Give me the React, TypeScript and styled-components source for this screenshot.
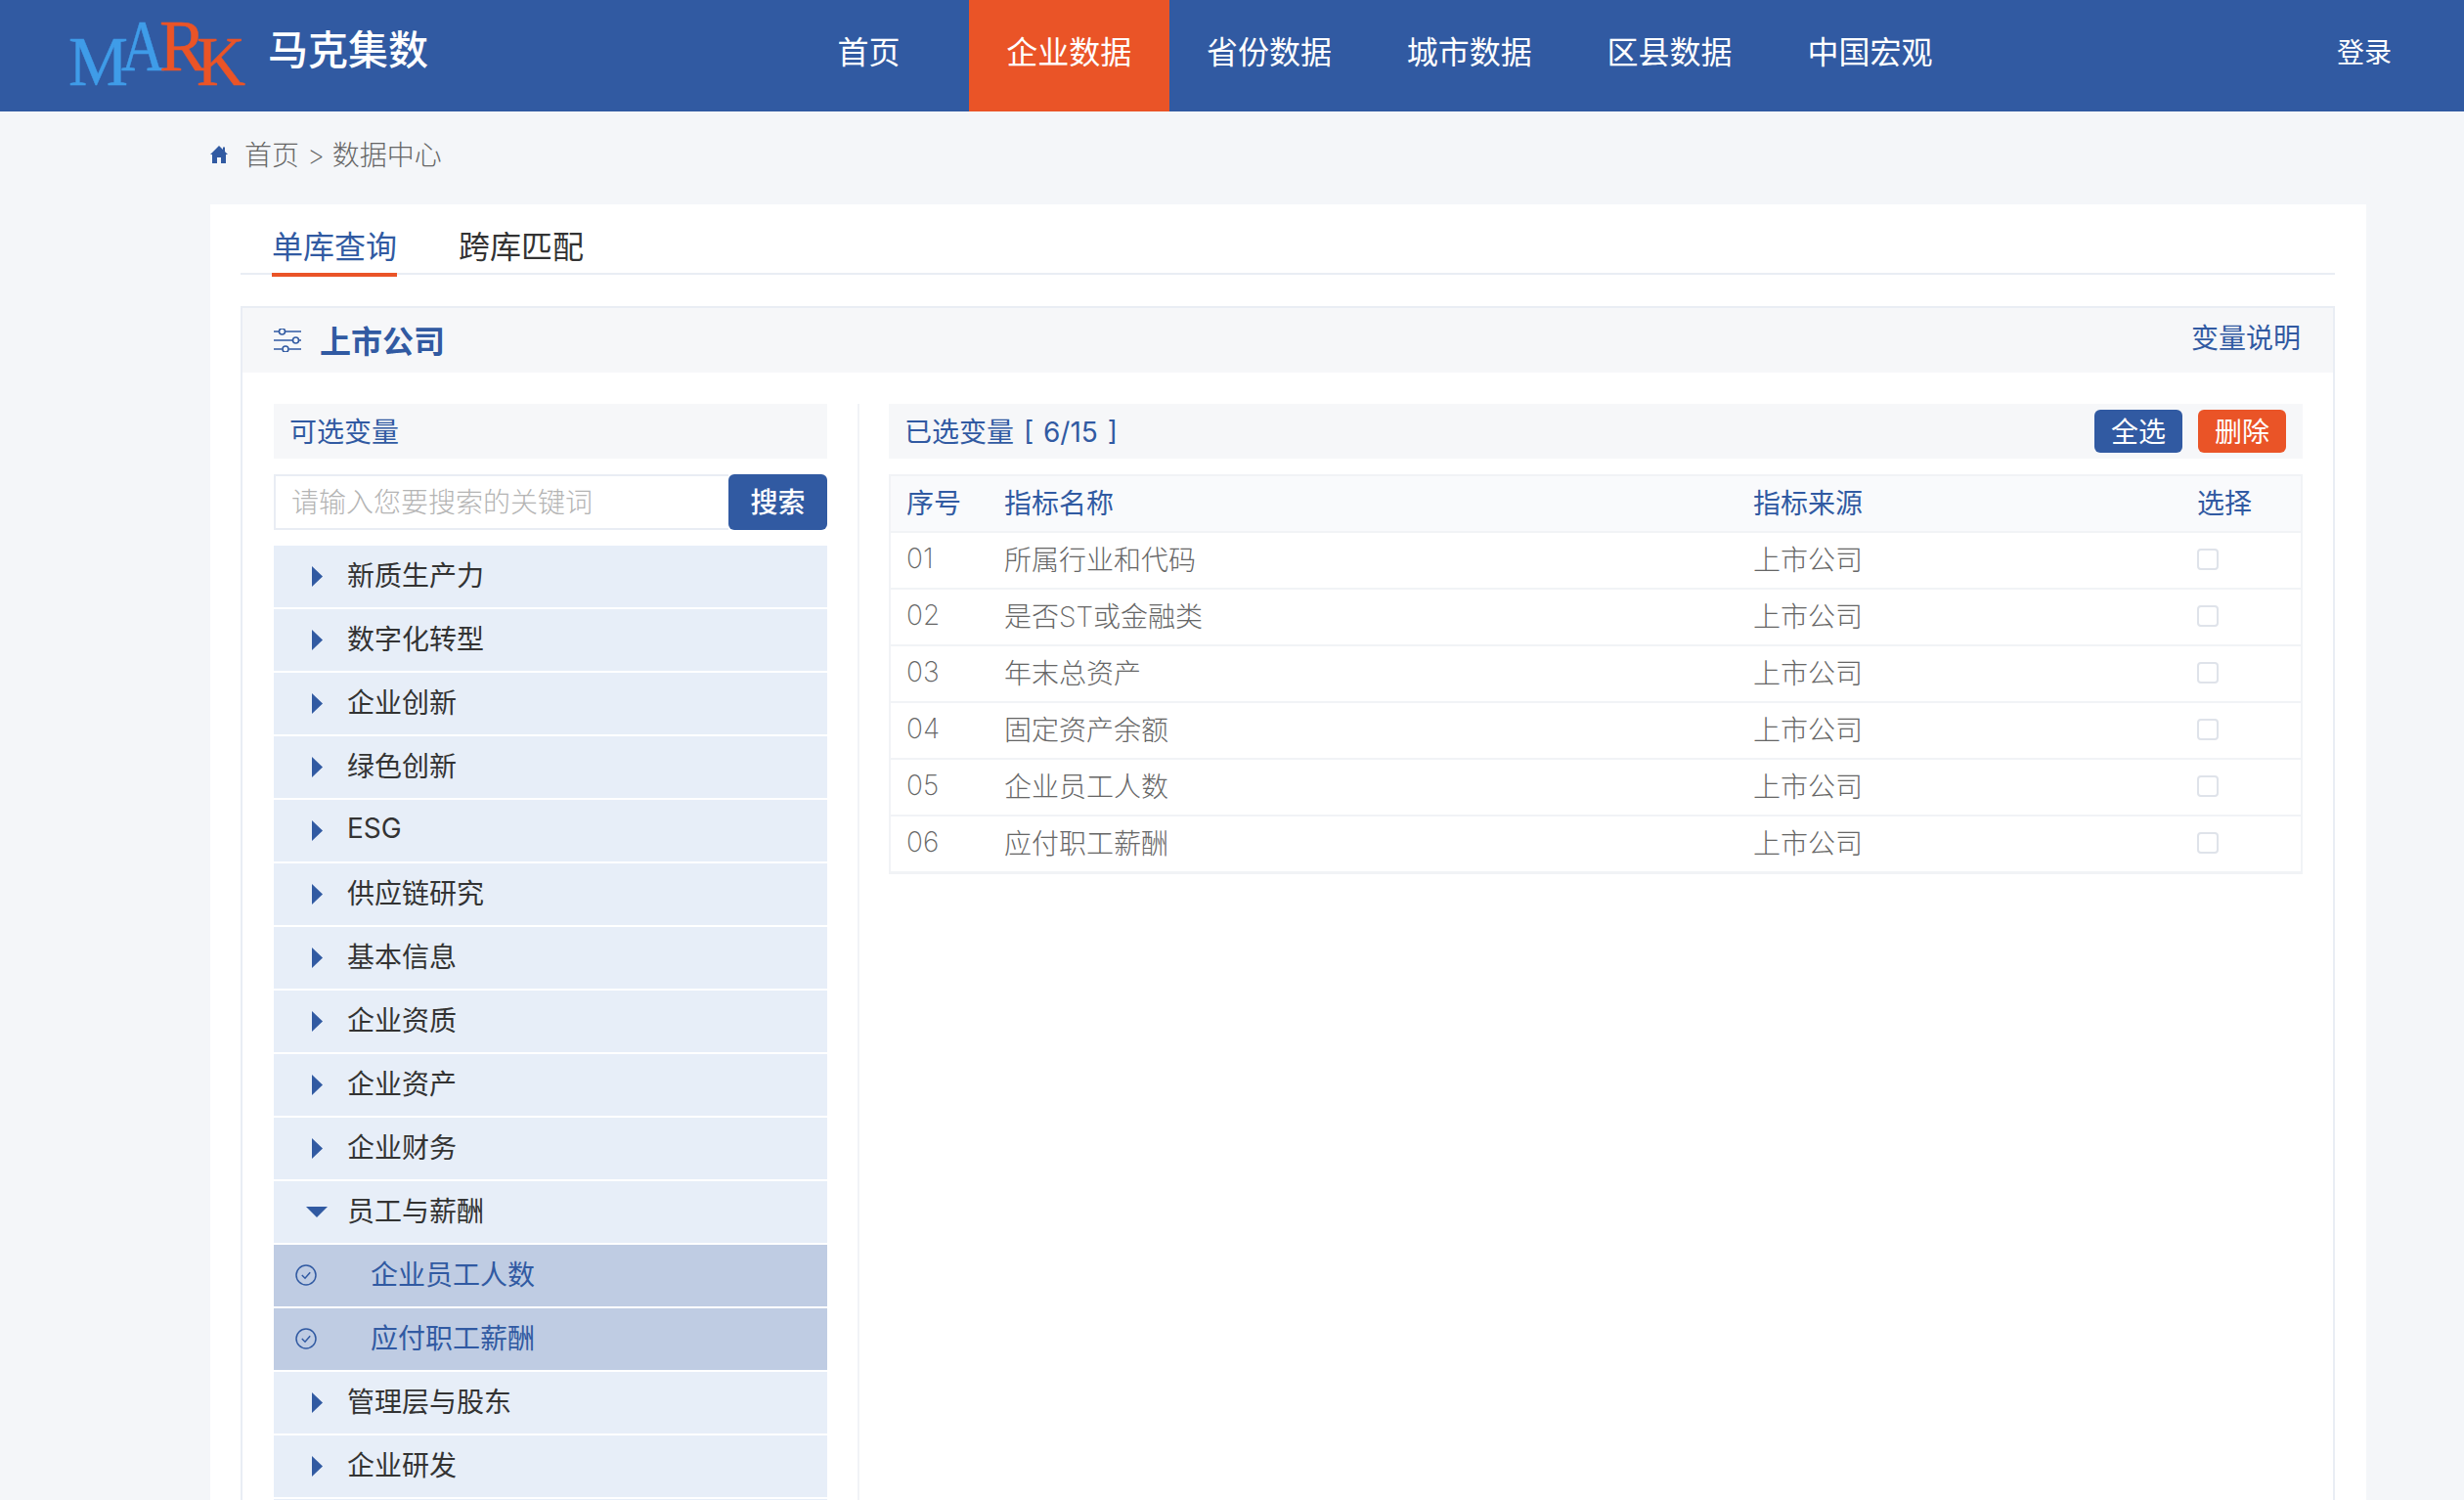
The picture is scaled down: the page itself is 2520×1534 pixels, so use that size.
import React from "react";
import styled, { createGlobalStyle } from "styled-components";

const BLUE = "#315aa2";
const ORANGE = "#ea5427";
const LINE = "#e9edf4";
const SANS = `"Inter", "Noto Sans CJK SC", sans-serif`;

const GlobalStyle = createGlobalStyle`
  html, body {
    margin: 0;
    height: 100%;
    overflow: hidden;
    background: #f4f6f9;
    font-family: ${SANS};
  }
  * { box-sizing: border-box; }
`;

const Page = styled.div`
  height: 1534px;
  overflow: hidden;
`;

const Header = styled.header`
  display: flex;
  align-items: stretch;
  height: 114px;
  background: ${BLUE};
  color: #fff;
`;

const Brand = styled.div`
  display: flex;
  align-items: center;
  width: 786px;
  padding-left: 68px;
`;

const BrandName = styled.span`
  margin: -18px 0 0 20px;
  font-size: 41px;
  font-weight: 500;
`;

const Nav = styled.nav`
  display: flex;
`;

const NavItem = styled.a<{ $active?: boolean }>`
  display: flex;
  align-items: center;
  justify-content: center;
  width: 204.8px;
  padding-bottom: 12px;
  font-size: 32px;
  background: ${(p) => (p.$active ? ORANGE : "transparent")};
`;

const Login = styled.a`
  display: flex;
  align-items: center;
  margin-left: auto;
  padding: 0 74px 10px 0;
  font-size: 28px;
`;

const Main = styled.main`
  padding: 0 100px 0 215px;
`;

const Crumb = styled.div`
  display: flex;
  align-items: center;
  height: 88px;
  margin-bottom: 7px;
  font-size: 28px;
  font-weight: 200;
  color: #666;
`;

const CrumbLabel = styled.span`
  margin: -2px 0 0 17px;
`;

const Card = styled.section`
  padding: 0 32px 0 31px;
  background: #fff;
`;

const Tabs = styled.div`
  display: flex;
  align-items: flex-end;
  height: 72px;
  padding-left: 32px;
  border-bottom: 2px solid ${LINE};
`;

const Tab = styled.a<{ $active?: boolean }>`
  margin: 0 63px -4px 0;
  padding-bottom: 6px;
  font-size: 32px;
  line-height: 41px;
  color: ${(p) => (p.$active ? BLUE : "#333")};
  border-bottom: 4px solid ${(p) => (p.$active ? ORANGE : "transparent")};
`;

const Panel = styled.div`
  margin-top: 32px;
  border: 2px solid ${LINE};
  border-bottom: 0;
`;

const PanelHead = styled.div`
  display: flex;
  align-items: center;
  height: 66px;
  padding: 0 33px 0 32px;
  background: #f6f7f9;
`;

const PanelTitle = styled.h2`
  margin: -2px 0 0 19px;
  font-size: 32px;
  font-weight: 700;
  color: ${BLUE};
`;

const Explain = styled.a`
  margin: -8px 0 0 auto;
  font-size: 28px;
  color: ${BLUE};
`;

const PanelBody = styled.div`
  display: flex;
  padding: 32px 31px 0 32px;
`;

const LeftCol = styled.div`
  flex: none;
  width: 566px;
`;

const RightCol = styled.div`
  flex: 1;
  margin-left: 31px;
  padding-left: 30px;
  border-left: 2px solid #f1f3f6;
`;

const SectionBar = styled.div`
  display: flex;
  align-items: center;
  height: 56px;
  padding: 0 17px 3px 16px;
  margin-bottom: 16px;
  background: #f6f7f9;
  font-size: 28px;
  color: ${BLUE};
`;

const Search = styled.div`
  display: flex;
  height: 57px;
  margin-bottom: 16px;
`;

const SearchInput = styled.input`
  flex: 1;
  min-width: 0;
  padding: 0 0 0 16px;
  border: 2px solid ${LINE};
  border-right: 0;
  outline: 0;
  font-family: ${SANS};
  font-size: 28px;
  font-weight: 200;
  &::placeholder {
    color: #b4b4b4;
  }
`;

const SearchButton = styled.button`
  width: 101px;
  padding: 0 0 4px;
  border: 0;
  border-radius: 6px;
  background: ${BLUE};
  color: #fff;
  font-family: ${SANS};
  font-size: 28px;
  font-weight: 500;
`;

const Row = styled.div<{ $selected?: boolean }>`
  display: flex;
  align-items: center;
  height: 63px;
  margin-bottom: 2px;
  padding-bottom: 5px;
  background: ${(p) => (p.$selected ? "#bfcce3" : "#e7eef8")};
  font-size: 28px;
  color: ${(p) => (p.$selected ? BLUE : "#333")};
`;

const ArrowBox = styled.span`
  display: flex;
  justify-content: center;
  flex: none;
  width: 75px;
  padding: 5px 0 0 13px;
`;

const CheckBox = styled.span`
  display: flex;
  flex: none;
  width: 99px;
  padding: 4px 0 0 22px;
`;

const ToolButton = styled.button<{ $danger?: boolean }>`
  width: 90px;
  height: 44px;
  padding: 0 0 3px;
  margin: 3px 0 0 16px;
  border: 0;
  border-radius: 6px;
  background: ${(p) => (p.$danger ? ORANGE : BLUE)};
  color: #fff;
  font-family: ${SANS};
  font-size: 28px;
`;

const SelectedCount = styled.span`
  margin-right: auto;
  word-spacing: 2px;
`;

const Table = styled.div`
  border: 2px solid #f1f3f6;
  border-bottom-width: 3px;
`;

const TableRow = styled.div<{ $head?: boolean }>`
  display: grid;
  grid-template-columns: 100px 766px 454px 1fr;
  align-items: center;
  height: 58px;
  padding: 0 0 4px 16px;
  border-bottom: 2px solid #f1f3f6;
  background: ${(p) => (p.$head ? "#f9fafc" : "#fff")};
  font-size: 28px;
  font-weight: ${(p) => (p.$head ? 400 : 200)};
  color: ${(p) => (p.$head ? BLUE : "#666")};
  &:last-child {
    border-bottom: 0;
    height: 56px;
  }
`;

const Tick = styled.span`
  width: 22px;
  height: 22px;
  margin-top: 2px;
  border: 2px solid #dfe3ea;
  border-radius: 4px;
  background: #fff;
`;

const LogoMark = styled.svg`
  flex: none;
  overflow: visible;
  margin-top: -3px;
`;

const Logo = () => (
  <LogoMark width="186" height="68" viewBox="0 0 186 68">
    <g fontFamily='"Liberation Serif", serif' fontSize="72">
      <text x="2" y="65" fill="#3f9ce8" stroke="#3f9ce8" strokeWidth="0.5" textLength="61" lengthAdjust="spacingAndGlyphs">
        M
      </text>
      <text x="56" y="50" fill="#3f9ce8" stroke="#3f9ce8" strokeWidth="0.5" fontSize="73" textLength="44" lengthAdjust="spacingAndGlyphs">
        A
      </text>
      <text x="95" y="50" fill={ORANGE} stroke={ORANGE} strokeWidth="0.5" fontSize="73" textLength="48" lengthAdjust="spacingAndGlyphs">
        R
      </text>
      <text x="133" y="65" fill={ORANGE} stroke={ORANGE} strokeWidth="0.5" textLength="50" lengthAdjust="spacingAndGlyphs">
        K
      </text>
    </g>
  </LogoMark>
);

const HomeIcon = () => (
  <svg width="18" height="18" viewBox="0 0 18 18" fill={BLUE}>
    <path d="M9 0 L13 4 V1.5 H15 V6 L18 9 L16 9 L16 18 L11 18 L11 12 L7 12 L7 18 L2 18 L2 9 L0 9 Z" />
  </svg>
);

const SlidersIcon = () => (
  <svg width="28" height="24" viewBox="0 0 28 24" fill="none" stroke={BLUE} strokeWidth="1.6">
    <path d="M0 3H5M12 3H28M0 12H19M26 12H28M0 21H8.500M15.500 21H28" />
    <circle cx="8.500" cy="3" r="3" />
    <circle cx="22.500" cy="12" r="3" />
    <circle cx="12" cy="21" r="3" />
  </svg>
);

const ArrowRight = () => (
  <svg width="11" height="21" viewBox="0 0 11 21" fill={BLUE}>
    <path d="M0 0 L11 10.5 L0 21 Z" />
  </svg>
);

const ArrowDown = () => (
  <svg width="22" height="11" viewBox="0 0 22 11" fill={BLUE}>
    <path d="M0 0 H22 L11 11 Z" />
  </svg>
);

const CheckIcon = () => (
  <svg width="22" height="22" viewBox="0 0 22 22" fill="none" stroke={BLUE} strokeWidth="1.5">
    <circle cx="11" cy="11" r="10" />
    <path d="M6.8 11 L10 14.2 L15.2 8.2" />
  </svg>
);

const navItems = ["首页", "企业数据", "省份数据", "城市数据", "区县数据", "中国宏观"];

const categories = [
  { label: "新质生产力" },
  { label: "数字化转型" },
  { label: "企业创新" },
  { label: "绿色创新" },
  { label: "ESG" },
  { label: "供应链研究" },
  { label: "基本信息" },
  { label: "企业资质" },
  { label: "企业资产" },
  { label: "企业财务" },
  { label: "员工与薪酬", open: true },
  { label: "企业员工人数", selected: true },
  { label: "应付职工薪酬", selected: true },
  { label: "管理层与股东" },
  { label: "企业研发" },
];

const picked = ["所属行业和代码", "是否ST或金融类", "年末总资产", "固定资产余额", "企业员工人数", "应付职工薪酬"];

const App = () => (
  <Page>
    <GlobalStyle />
    <Header>
      <Brand>
        <Logo />
        <BrandName>马克集数</BrandName>
      </Brand>
      <Nav>
        {navItems.map((item) => (
          <NavItem key={item} $active={item === "企业数据"}>
            {item}
          </NavItem>
        ))}
      </Nav>
      <Login>登录</Login>
    </Header>
    <Main>
      <Crumb>
        <HomeIcon />
        <CrumbLabel>首页 &gt; 数据中心</CrumbLabel>
      </Crumb>
      <Card>
        <Tabs>
          <Tab $active>单库查询</Tab>
          <Tab>跨库匹配</Tab>
        </Tabs>
        <Panel>
          <PanelHead>
            <SlidersIcon />
            <PanelTitle>上市公司</PanelTitle>
            <Explain>变量说明</Explain>
          </PanelHead>
          <PanelBody>
            <LeftCol>
              <SectionBar>可选变量</SectionBar>
              <Search>
                <SearchInput placeholder="请输入您要搜索的关键词" />
                <SearchButton>搜索</SearchButton>
              </Search>
              {categories.map((c) =>
                c.selected ? (
                  <Row key={c.label} $selected>
                    <CheckBox>
                      <CheckIcon />
                    </CheckBox>
                    {c.label}
                  </Row>
                ) : (
                  <Row key={c.label}>
                    <ArrowBox>{c.open ? <ArrowDown /> : <ArrowRight />}</ArrowBox>
                    {c.label}
                  </Row>
                ),
              )}
              <Row />
            </LeftCol>
            <RightCol>
              <SectionBar>
                <SelectedCount>已选变量 [ 6/15 ]</SelectedCount>
                <ToolButton>全选</ToolButton>
                <ToolButton $danger>删除</ToolButton>
              </SectionBar>
              <Table>
                <TableRow $head>
                  <span>序号</span>
                  <span>指标名称</span>
                  <span>指标来源</span>
                  <span>选择</span>
                </TableRow>
                {picked.map((name, i) => (
                  <TableRow key={name}>
                    <span>{`0${i + 1}`}</span>
                    <span>{name}</span>
                    <span>上市公司</span>
                    <Tick />
                  </TableRow>
                ))}
              </Table>
            </RightCol>
          </PanelBody>
        </Panel>
      </Card>
    </Main>
  </Page>
);

export default App;
